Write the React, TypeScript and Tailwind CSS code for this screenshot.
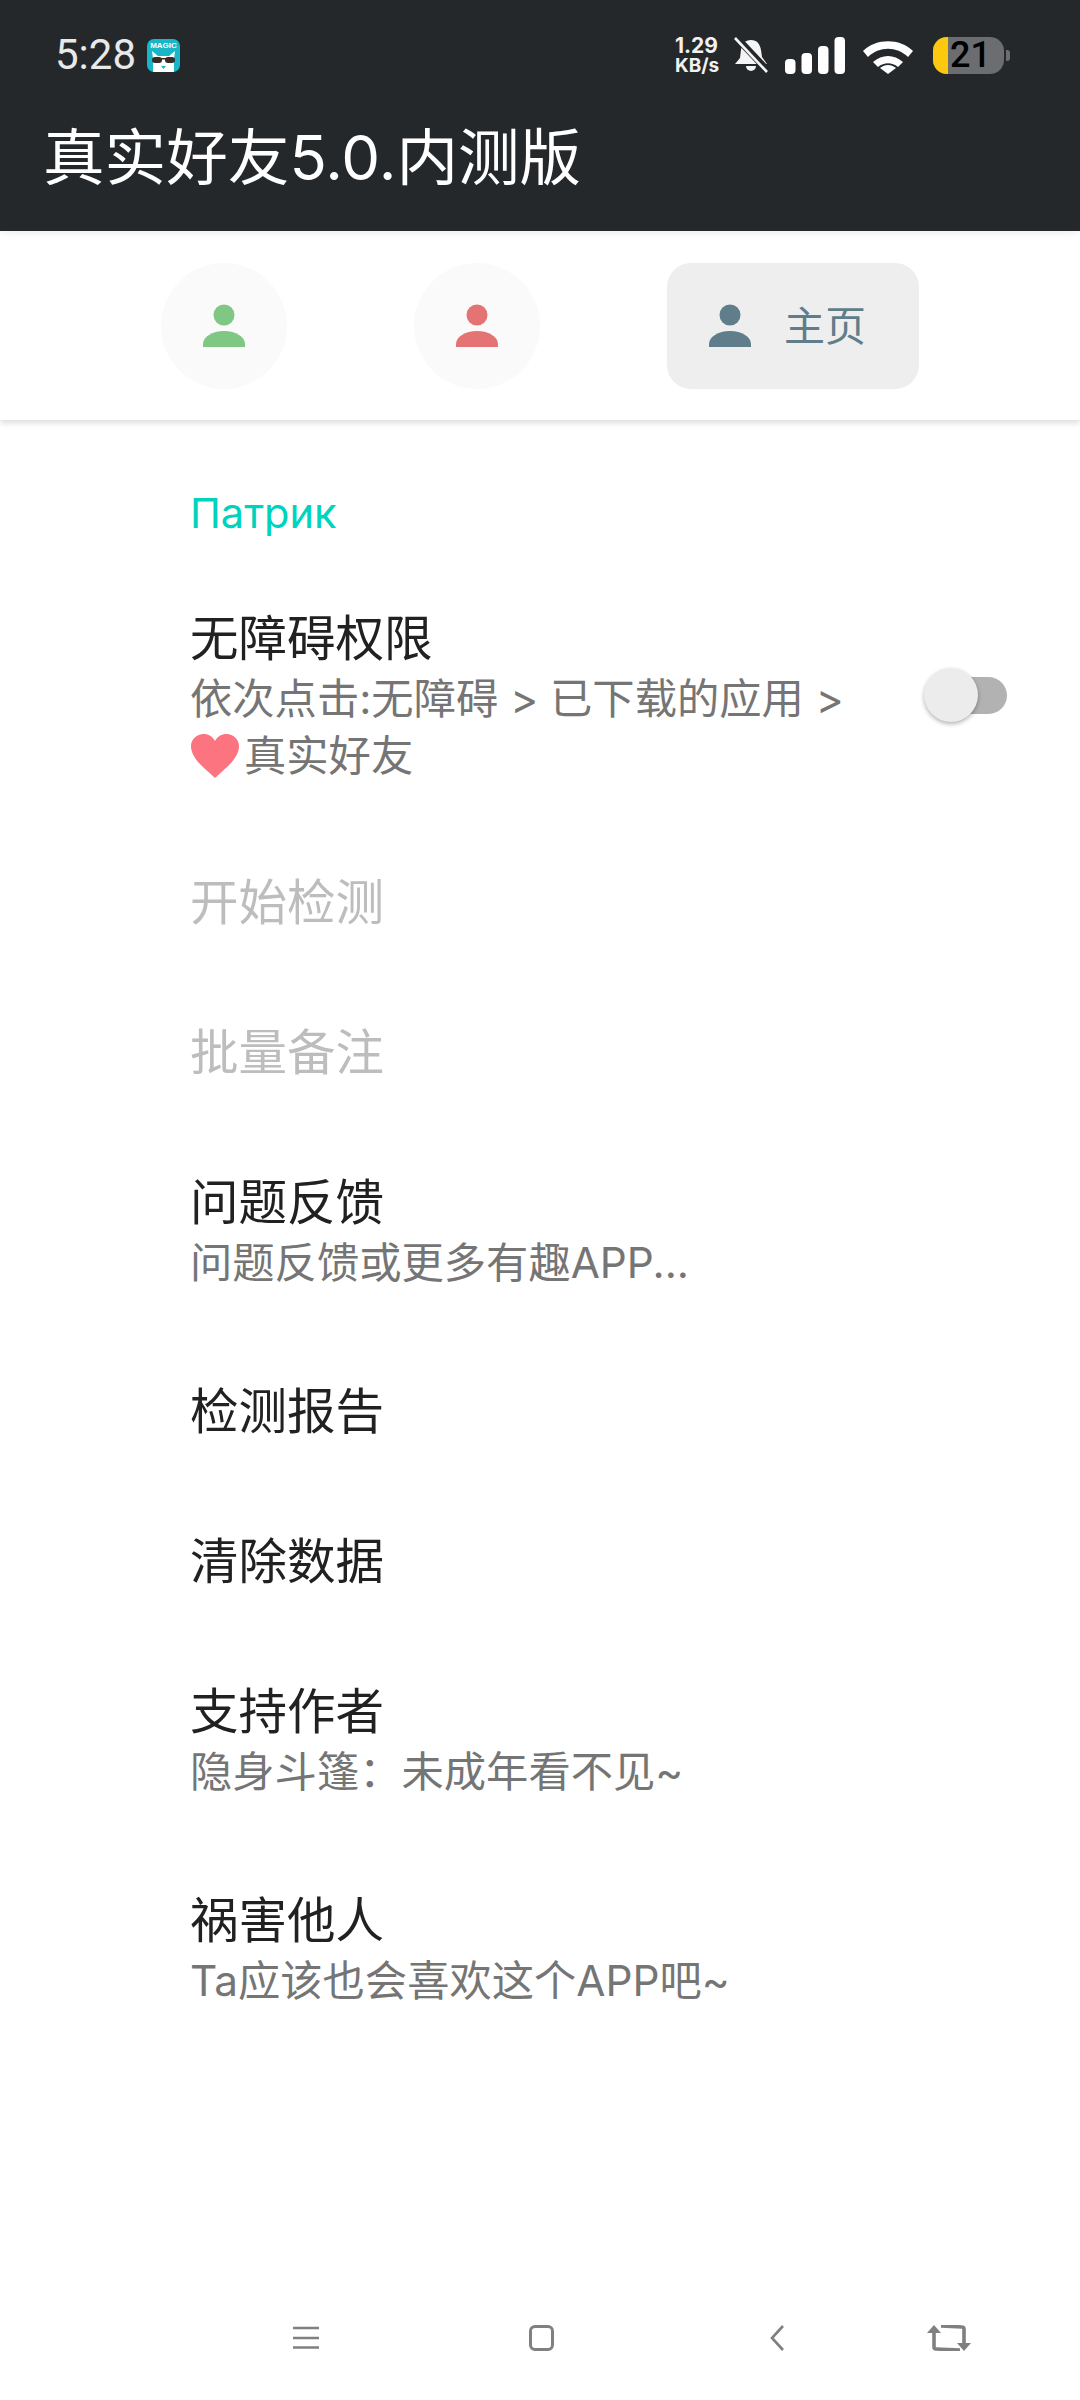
const sans = 'font-["Inter","Noto_Sans_CJK_SC",sans-serif]';

function Person({ color, className }: { color: string; className?: string }) {
  return (
    <svg width="44" height="44" viewBox="0 0 44 44" className={className}>
      <circle cx="22" cy="11" r="10.5" fill={color} />
      <path d="M1 43v-3C1 33 10 27 22 27s21 6 21 13v3z" fill={color} />
    </svg>
  );
}

function MagicIcon() {
  return (
    <div className="relative ml-[11px] h-[33px] w-[33px] overflow-hidden rounded-[7px] bg-[#18b6c6]">
      <span className="absolute left-0 right-0 top-[3px] text-center font-['Liberation_Sans',sans-serif] text-[8px] font-bold leading-[8px] text-white">
        MAGIC
      </span>
      <svg width="33" height="33" viewBox="0 0 33 33" className="absolute left-0 top-0">
        <path d="M6 33V20L5 12l6 5h11l6-5-1 8v13z" fill="#fff" />
        <rect x="5" y="18" width="10" height="6" rx="3" fill="#3a2a28" />
        <rect x="18" y="18" width="10" height="6" rx="3" fill="#3a2a28" />
        <rect x="14" y="19" width="5" height="1.5" fill="#3a2a28" />
        <path d="M14 27h5l-2.500 3z" fill="#18b6c6" />
      </svg>
    </div>
  );
}

function StatusIcons() {
  return (
    <div className="flex items-center">
      <div className="w-[50px] font-['Inter',sans-serif] font-bold text-[#f1f1f1]">
        <div className="text-[21px] leading-[21px]">1.29</div>
        <div className="text-[19px] leading-[19px]">KB/s</div>
      </div>
      <svg width="36" height="36" viewBox="0 0 36 36" className="ml-[8px]">
        <path d="M18 3c6 0 9 4 10 10l1 7 5 7H2l5-6 1-8C9 7 12 3 18 3z" fill="#f5f5f5" />
        <path d="M13 29h10a5 5 0 0 1-10 0z" fill="#f5f5f5" />
        <path d="M3 0l32 34" stroke="#24282b" strokeWidth="7" />
        <path d="M2 1l32 34" stroke="#f5f5f5" strokeWidth="2.600" />
      </svg>
      <svg width="61" height="37" viewBox="0 0 61 37" className="ml-[16px]">
        <rect x="0" y="22" width="10.500" height="15" rx="4" fill="#fff" />
        <rect x="16.500" y="16" width="10.500" height="21" rx="4" fill="#fff" />
        <rect x="33" y="9" width="10.500" height="28" rx="4" fill="#fff" />
        <rect x="49.500" y="0" width="10.500" height="37" rx="4" fill="#fff" />
      </svg>
      <svg width="52" height="37" viewBox="0 0 52 37" className="ml-[16px]">
        <path d="M1 14C14 1 38 1 51 14l-5 6C35 9 17 9 6 20z" fill="#fff" />
        <path d="M11 25c9-8 21-8 30 0l-5 5c-6-5-14-5-20 0z" fill="#fff" />
        <path d="M18 31c5-4 11-4 16 0l-8 6z" fill="#fff" />
      </svg>
      <div className="ml-[19px] flex h-[37px] w-[71px] items-center rounded-[14px] bg-[#6b6d70]">
        <div className="h-full w-[15px] rounded-l-[14px] bg-[#fdc90f]" />
        <span className="ml-[2px] font-['Roboto',sans-serif] text-[36px] font-medium leading-[37px] text-black">21</span>
      </div>
      <div className="ml-[2px] h-[11px] w-[4px] rounded-r-[3px] bg-[#6b6d70]" />
    </div>
  );
}

function Header() {
  return (
    <header className="relative z-10 h-[231px] bg-[#24282b] shadow-[0_2px_8px_rgba(0,0,0,0.08)]">
      <div className="flex h-[110px] items-center justify-between pl-[55px] pr-[70px]">
        <div className="flex items-center">
          <span className="font-['Roboto',sans-serif] text-[42px] leading-[48px] text-[#e9e9e9]">5:28</span>
          <MagicIcon />
        </div>
        <StatusIcons />
      </div>
      <h1 className="pl-[43px] pt-[2px] text-[61.600px] font-normal leading-[92px] text-white">真实好友5.0.内测版</h1>
    </header>
  );
}

function Tabs() {
  return (
    <div className="relative flex h-[189px] items-center justify-between px-[161px] shadow-[0_3px_6px_rgba(0,0,0,0.14)]">
      <div className="flex h-[126px] w-[126px] items-center justify-center rounded-full bg-[#fafafa]">
        <Person color="#81c784" />
      </div>
      <div className="flex h-[126px] w-[126px] items-center justify-center rounded-full bg-[#fafafa]">
        <Person color="#e57373" />
      </div>
      <div className="flex h-[126px] w-[252px] items-center rounded-[24px] bg-[#eeeeee] pl-[41px]">
        <Person color="#607d8b" />
        <span className="ml-[32px] text-[41px] leading-[48px] text-[#607d8b]">主页</span>
      </div>
    </div>
  );
}

function Heart() {
  return (
    <svg width="48" height="44" viewBox="0 0 48 44" className="mr-[5px] ml-[1px] shrink-0">
      <path
        d="M24 44C12 33 0 24 0 12 0 5 6 0 12.500 0 17.500 0 21.500 2.500 24 7 26.500 2.500 30.500 0 35.500 0 42 0 48 5 48 12 48 24 36 33 24 44z"
        fill="#fb7480"
      />
    </svg>
  );
}

function Row({ title, sub, disabled }: { title: string; sub?: string; disabled?: boolean }) {
  return (
    <div className={sub ? 'pb-[46px] pl-[190px] pt-[45px]' : 'py-[45px] pl-[190px]'}>
      <div className={disabled ? 'text-[48.500px] leading-[60px] text-[#bdbdbd]' : 'text-[48.500px] leading-[60px] text-[#212121]'}>
        {title}
      </div>
      {sub && <div className="mt-[1px] text-[42.300px] leading-[57px] text-[#757575]">{sub}</div>}
    </div>
  );
}

function Settings() {
  return (
    <main className="flex-1 pt-[64px]">
      <div className="pl-[190px] text-[41.500px] leading-[58px] text-[#00d3bd]">Патрик</div>
      <div className="flex items-center pb-[44px] pl-[190px] pr-[73px] pt-[67px]">
        <div className="flex-1">
          <div className="text-[48.500px] leading-[60px] text-[#212121]">无障碍权限</div>
          <div className="mt-[1px] text-[42.300px] leading-[57px] text-[#757575]">依次点击:无障碍 &gt; 已下载的应用 &gt;</div>
          <div className="flex items-center text-[42.300px] leading-[57px] text-[#757575]">
            <Heart />
            真实好友
          </div>
        </div>
        <div className="relative mb-[3px] h-[37px] w-[78px] rounded-full bg-[#b2b2b2]">
          <div className="absolute -top-[9px] left-[-5px] h-[54px] w-[54px] rounded-full bg-[#ececec] shadow-[0_2px_4px_rgba(0,0,0,0.3)]" />
        </div>
      </div>
      <Row title="开始检测" disabled />
      <Row title="批量备注" disabled />
      <Row title="问题反馈" sub="问题反馈或更多有趣APP..." />
      <Row title="检测报告" />
      <Row title="清除数据" />
      <Row title="支持作者" sub="隐身斗篷：未成年看不见~" />
      <Row title="祸害他人" sub="Ta应该也会喜欢这个APP吧~" />
    </main>
  );
}

function NavBar() {
  return (
    <nav className="flex h-[110px] items-start pl-[293px] pt-[35px]">
      <svg width="26" height="26" viewBox="0 0 26 26">
        <path d="M0 3h26M0 13h26M0 22.500h26" stroke="#808080" strokeWidth="2.600" />
      </svg>
      <svg width="25" height="26" viewBox="0 0 25 26" className="ml-[210px]">
        <rect x="1.500" y="1.500" width="22" height="23" rx="4.500" fill="none" stroke="#808080" strokeWidth="3" />
      </svg>
      <svg width="14" height="26" viewBox="0 0 14 26" className="ml-[216px]">
        <path d="M13 1L2 13l11 12" fill="none" stroke="#808080" strokeWidth="2.600" />
      </svg>
      <svg width="44" height="26" viewBox="0 0 44 26" className="ml-[143px]">
        <path d="M7 7v15a2 2 0 0 0 2 2l24 1" fill="none" stroke="#808080" strokeWidth="3.600" />
        <path d="M7 0l7 8H0z" fill="#808080" />
        <path d="M14 1l21 1a2 2 0 0 1 2 2v15" fill="none" stroke="#808080" strokeWidth="3.600" />
        <path d="M37 26l7-8H30z" fill="#808080" />
      </svg>
    </nav>
  );
}

export default function App() {
  return (
    <div className={`flex h-[2400px] w-[1080px] flex-col bg-white ${sans}`}>
      <Header />
      <Tabs />
      <Settings />
      <NavBar />
    </div>
  );
}
